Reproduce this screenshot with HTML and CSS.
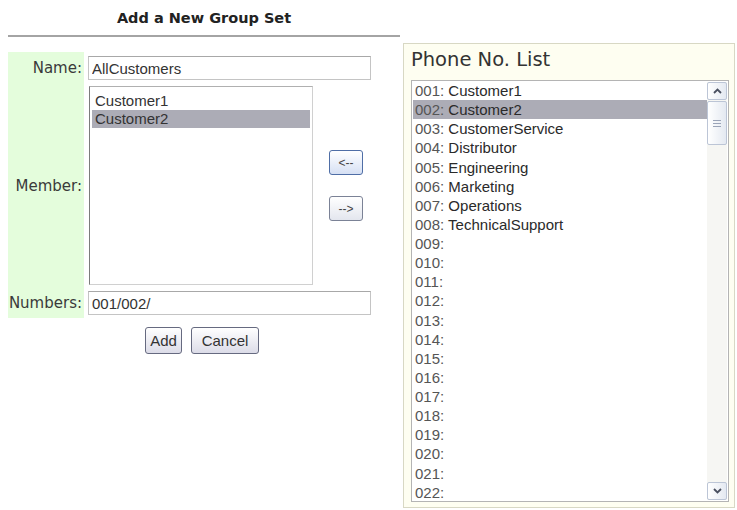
FILE: index.html
```html
<!DOCTYPE html>
<html>
<head>
	<meta charset="utf-8">
	<title>Add a New Group Set</title>
	<link rel="stylesheet" href="styles.css">
</head>
<body>
	<div class="page">
		<!-- 左边：新建分组 -->
		<div class="group">
			<h2 class="title">Add a New Group Set</h2>
			<div class="form">
				<label class="lbl">Name:</label>
				<div class="field"><input class="txt" type="text" value="AllCustomers"></div>

				<label class="lbl">Member:</label>
				<div class="field member">
					<div class="listbox">
						<div class="opt">Customer1</div>
						<div class="opt sel">Customer2</div>
					</div>
					<div class="movers">
						<button class="mv focus">&lt;--</button>
						<button class="mv">--&gt;</button>
					</div>
				</div>

				<label class="lbl">Numbers:</label>
				<div class="field"><input class="txt" type="text" value="001/002/"></div>
			</div>
			<div class="actions">
				<button class="btn add">Add</button>
				<button class="btn cancel">Cancel</button>
			</div>
		</div>

		<!-- 右边：电话列表 -->
		<div class="phones">
			<h3 class="phones-title">Phone No. List</h3>
			<div class="plist">
				<div class="rows">
					<div class="row"><span class="no">001:</span> Customer1</div>
					<div class="row sel"><span class="no">002:</span> Customer2</div>
					<div class="row"><span class="no">003:</span> CustomerService</div>
					<div class="row"><span class="no">004:</span> Distributor</div>
					<div class="row"><span class="no">005:</span> Engineering</div>
					<div class="row"><span class="no">006:</span> Marketing</div>
					<div class="row"><span class="no">007:</span> Operations</div>
					<div class="row"><span class="no">008:</span> TechnicalSupport</div>
					<div class="row"><span class="no">009:</span></div>
					<div class="row"><span class="no">010:</span></div>
					<div class="row"><span class="no">011:</span></div>
					<div class="row"><span class="no">012:</span></div>
					<div class="row"><span class="no">013:</span></div>
					<div class="row"><span class="no">014:</span></div>
					<div class="row"><span class="no">015:</span></div>
					<div class="row"><span class="no">016:</span></div>
					<div class="row"><span class="no">017:</span></div>
					<div class="row"><span class="no">018:</span></div>
					<div class="row"><span class="no">019:</span></div>
					<div class="row"><span class="no">020:</span></div>
					<div class="row"><span class="no">021:</span></div>
					<div class="row"><span class="no">022:</span></div>
				</div>
				<div class="sbar">
					<div class="sb-btn"><svg width="9" height="6" viewBox="0 0 9 6"><path d="M1 5 L4.5 1.5 L8 5" fill="none" stroke="#4a5060" stroke-width="1.8"/></svg></div>
					<div class="sb-thumb"><span></span><span></span><span></span></div>
					<div class="sb-track"></div>
					<div class="sb-btn"><svg width="9" height="6" viewBox="0 0 9 6"><path d="M1 1 L4.5 4.5 L8 1" fill="none" stroke="#4a5060" stroke-width="1.8"/></svg></div>
				</div>
			</div>
		</div>
	</div>
</body>
</html>
```

FILE: styles.css
```css
/*先去掉默认边距*/
body,div,h2,h3{margin:0;padding:0;}
body{background:#fff;color:#333;font:15px "Liberation Sans",Arial,sans-serif;}
.page{display:flex;align-items:flex-start;}

/*左边*/
.group{width:392px;margin-left:8px;}
.title{
	height:35px;
	line-height:36px;
	text-align:center;
	font:bold 14.5px/36px "DejaVu Sans",Verdana,sans-serif;
	color:#222;
	border-bottom:2px solid #a4a4a4;
}
.form{
	display:grid;
	grid-template-columns:76px 1fr;
	column-gap:4px;
	row-gap:6px;
	margin-top:15px;
	padding:4px 0 3px;
	/*标签那一列是浅绿色*/
	background:linear-gradient(to right,#e4fddc 76px,transparent 76px);
}
.lbl{
	display:flex;
	align-items:center;
	justify-content:flex-end;
	padding-right:2px;
	font:15px "DejaVu Sans",Verdana,sans-serif;
	color:#3a3a3a;
}
.txt{
	box-sizing:border-box;
	width:283px;
	height:24px;
	padding:0 3px;
	border:1px solid #c4c4c4;
	border-top-color:#a8a8a8;
	font:15px "Liberation Sans",Arial,sans-serif;
	color:#333;
	outline:none;
}
.member{display:flex;align-items:center;}
.listbox{
	box-sizing:border-box;
	width:224px;
	height:199px;
	margin-left:1px;
	padding:5px 2px 2px;
	border:1px solid #d0d0d0;
	border-left-color:#7c7c7c;
	border-top-color:#b0b0b0;
}
.opt{height:18px;line-height:18px;padding-left:3px;color:#333;}
.opt.sel{background:#acacb6;}
.movers{display:flex;flex-direction:column;gap:21px;margin-left:16px;}
.mv{
	width:34px;
	height:25px;
	padding:0;
	border:1px solid #7b8296;
	border-radius:3px;
	background:linear-gradient(#ffffff,#e3e6ee);
	font:12px "Liberation Sans",Arial,sans-serif;
	color:#444;
}
.mv.focus{border-color:#4f6ea6;background:linear-gradient(#ffffff,#d6e0f4);}
.actions{display:flex;justify-content:center;gap:9px;margin-top:9px;padding-right:4px;}
.btn{
	height:27px;
	padding:0;
	border:1px solid #666a80;
	border-radius:3px;
	background:linear-gradient(#ffffff,#dcdce8);
	font:15px "Liberation Sans",Arial,sans-serif;
	color:#333;
}
.btn.add{width:37px;}
.btn.cancel{width:68px;}

/*右边*/
.phones{
	box-sizing:border-box;
	width:332px;
	height:465px;
	margin:43px 0 0 3px;
	padding:4px 5px 5px 7px;
	border:1px solid #d8d8c4;
	background:#fefef1;
}
.phones-title{
	font:19.5px/24px "DejaVu Sans",Verdana,sans-serif;
	font-weight:normal;
	color:#333;
}
.plist{
	display:flex;
	height:422px;
	box-sizing:border-box;
	margin-top:8px;
	border:1px solid #b4b4b4;
	background:#fff;
}
.rows{flex:1;padding-left:1px;overflow:hidden;}
.row{height:19.14px;line-height:19.14px;padding-left:2px;color:#2a2a2a;white-space:nowrap;}
.row.sel{background:#acacb6;}
.no{color:#555;}
.sbar{
	display:flex;
	flex-direction:column;
	width:20px;
	margin:1px 1px 1px 0;
	background:#f6f6f3;
}
.sb-btn,.sb-thumb{
	box-sizing:border-box;
	border:1px solid #bcc5d6;
	border-radius:2px;
	background:linear-gradient(to right,#ffffff,#e4e9f1);
}
.sb-btn{height:18px;display:flex;align-items:center;justify-content:center;}
.sb-thumb{
	height:44px;
	margin-top:1px;
	display:flex;
	flex-direction:column;
	align-items:center;
	justify-content:center;
	gap:2px;
}
.sb-thumb span{display:block;width:8px;height:1px;background:#9aa4b8;}
.sb-track{flex:1;}
```
